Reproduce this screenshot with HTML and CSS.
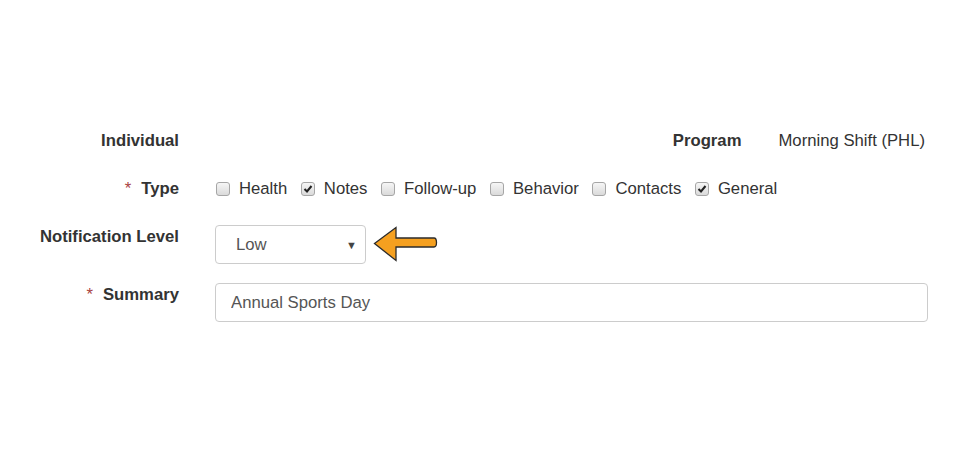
FILE: index.html
```html
<!DOCTYPE html>
<html lang="en">
<head>
  <meta charset="UTF-8">
  <title>Log Entry</title>
  <link rel="stylesheet" href="styles.css">
</head>
<body>

<div class="form">
  <div class="row row-top">
    <div class="label">Individual</div>
    <div class="field program">
      <span class="label">Program</span>
      <span class="value">Morning Shift (PHL)</span>
    </div>
  </div>

  <div class="row row-type">
    <div class="label"><span class="req">*</span>Type</div>
    <div class="field checks">
      <label class="check"><span class="box"></span>Health</label>
      <label class="check"><span class="box on"><svg viewBox="0 0 12 12"><path d="M2.5 6 L5 8.5 L9.5 3" /></svg></span>Notes</label>
      <label class="check"><span class="box"></span>Follow-up</label>
      <label class="check"><span class="box"></span>Behavior</label>
      <label class="check"><span class="box"></span>Contacts</label>
      <label class="check"><span class="box on"><svg viewBox="0 0 12 12"><path d="M2.5 6 L5 8.5 L9.5 3" /></svg></span>General</label>
    </div>
  </div>

  <div class="row row-level">
    <div class="label pad">Notification Level</div>
    <div class="field">
      <div class="select">
        <span>Low</span>
        <span class="caret">&#9660;</span>
      </div>
      <svg class="pointer" width="66" height="38" viewBox="0 0 66 38">
        <path d="M1.5 17.5 L23 1.5 L23 12 L61 12 Q63.5 12 63.5 16.5 Q63.5 21 61 21 L23 21 L23 34.5 Z" />
      </svg>
    </div>
  </div>

  <div class="row row-summary">
    <div class="label pad"><span class="req">*</span>Summary</div>
    <div class="field">
      <input class="text" type="text" value="Annual Sports Day">
    </div>
  </div>
</div>

</body>
</html>
```

FILE: styles.css
```css
body {
  margin: 0;
  background: #fff;
  font-family: "Liberation Sans", Arial, sans-serif;
  font-size: 16.7px;
  color: #333;
}
.form {
  padding-top: 131px;
  width: 928px;
}
.row {
  display: grid;
  grid-template-columns: 179px 1fr;
  column-gap: 36px;
  line-height: 20px;
}
.row-type {
  margin-top: 28px;
}
.row-level {
  margin-top: 26px;
}
.row-summary {
  margin-top: 19px;
}
.label {
  font-weight: bold;
  text-align: right;
  color: #333;
}
.label.pad {
  padding-top: 2px;
}
.req {
  color: #a94442;
  font-weight: normal;
  margin-right: 10px;
}
.program {
  display: flex;
  justify-content: flex-end;
  gap: 37px;
  padding-right: 3px;
}
.checks {
  display: flex;
  align-items: center;
  gap: 13.6px;
  padding-left: 1px;
}
.check {
  display: flex;
  align-items: center;
  gap: 9px;
}
.box {
  width: 14px;
  height: 14px;
  box-sizing: border-box;
  border: 1px solid #a6a6a6;
  border-radius: 3px;
  background: linear-gradient(#f6f6f6, #dadada);
  display: inline-block;
}
.box svg {
  display: block;
  width: 12px;
  height: 12px;
}
.box path {
  fill: none;
  stroke: #222;
  stroke-width: 2;
}
.field {
  display: flex;
  align-items: center;
}
.select {
  width: 151px;
  height: 39px;
  box-sizing: border-box;
  border: 1px solid #ccc;
  border-radius: 4px;
  display: flex;
  align-items: center;
  justify-content: space-between;
  padding: 1px 8px 0 20px;
  color: #555;
}
.caret {
  font-size: 11px;
  color: #444;
}
.pointer {
  margin-left: 7px;
}
.pointer path {
  fill: #f5a020;
  stroke: #2b2b2b;
  stroke-width: 1.3;
}
.text {
  width: 713px;
  height: 39px;
  box-sizing: border-box;
  border: 1px solid #ccc;
  border-radius: 4px;
  padding: 0 15px;
  font-family: inherit;
  font-size: 16.7px;
  color: #555;
}
```
